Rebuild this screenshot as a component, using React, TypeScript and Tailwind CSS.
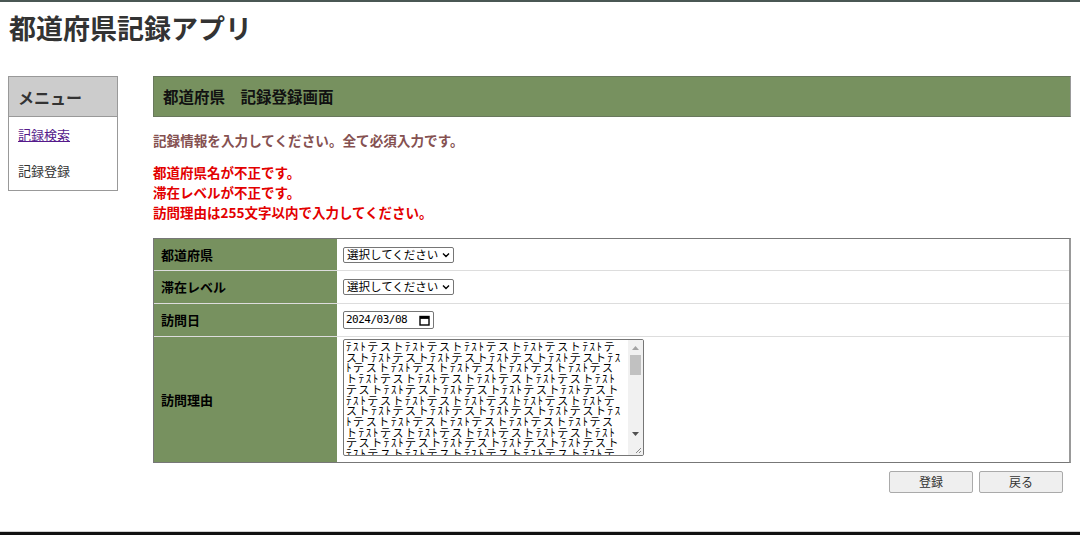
import React from "react";

const jp = { fontFamily: '"Noto Sans CJK JP", "Noto Sans", sans-serif' };

const testText = "ﾃｽﾄテスト".repeat(70);

function Select() {
    return (
        <div className="h-[16px] w-[111px] border border-[#767676] rounded-[2px] bg-white flex items-center pl-[3px] pr-[3px] text-[11.5px] leading-none text-black">
            <span>選択してください</span>
            <svg width="8" height="6" viewBox="0 0 8 6" className="ml-auto">
                <path d="M1 1.5 L4 4.5 L7 1.5" fill="none" stroke="#000" strokeWidth="1.4" />
            </svg>
        </div>
    );
}

function CalendarIcon() {
    return (
        <svg width="11" height="11" viewBox="0 0 11 11" className="ml-auto">
            <rect x="1" y="1.5" width="9" height="8.5" fill="none" stroke="#000" strokeWidth="1.4" />
            <rect x="1" y="1.5" width="9" height="2.4" fill="#000" />
        </svg>
    );
}

function Scrollbar() {
    return (
        <div className="w-[15px] flex flex-col bg-[#f1f1f1]">
            <div className="h-[15px] flex items-center justify-center">
                <svg width="7" height="4" viewBox="0 0 7 4"><path d="M0 4 L3.5 0 L7 4 Z" fill="#a3a3a3" /></svg>
            </div>
            <div className="mx-[2px] h-[20px] bg-[#c1c1c1]" />
            <div className="flex-1" />
            <div className="h-[15px] flex items-center justify-center">
                <svg width="7" height="4" viewBox="0 0 7 4"><path d="M0 0 L3.5 4 L7 0 Z" fill="#505050" /></svg>
            </div>
            <div className="h-[14px] flex items-end justify-end pr-[1px] pb-[1px]">
                <svg width="8" height="8" viewBox="0 0 8 8">
                    <path d="M7 2 L2 7 M7 5 L5 7" stroke="#888" strokeWidth="1" />
                </svg>
            </div>
        </div>
    );
}

export default function App() {
    return (
        <div className="h-[535px] flex flex-col border-t-2 border-[#4a5754] bg-white text-black" style={jp}>
            {/* タイトル */}
            <h1 className="pl-[9px] pt-[8px] text-[27px] leading-[36px] font-bold text-[#333]">都道府県記録アプリ</h1>

            <div className="flex mt-[30px] pl-[8px]">
                {/* メニュー */}
                <div className="w-[110px] border border-[#999] self-start pb-[1px]">
                    <div className="h-[40px] bg-[#cccccc] border-b border-[#999] flex items-center px-[9px] text-[16px] font-bold text-[#333]">
                        メニュー
                    </div>
                    <div className="h-[35px] flex items-center px-[9px] text-[13px]">
                        <a href="#" className="underline text-[#551a8b]">記録検索</a>
                    </div>
                    <div className="h-[37px] flex items-center px-[9px] text-[13px] text-[#333]">記録登録</div>
                </div>

                {/* メイン */}
                <div className="ml-[35px] w-[918px]">
                    <div className="h-[41px] bg-[#77915f] border border-[#69785d] border-r-[#999] flex items-center px-[9px] text-[15.5px] font-bold text-[#111]">
                        都道府県　記録登録画面
                    </div>

                    <p className="mt-[13px] text-[13.6px] leading-[20px] font-bold text-[#855151]">
                        記録情報を入力してください。全て必須入力です。
                    </p>

                    <div className="mt-[12px] text-[13.5px] leading-[20px] font-bold text-[#e30000]">
                        <p>都道府県名が不正です。</p>
                        <p>滞在レベルが不正です。</p>
                        <p>訪問理由は255文字以内で入力してください。</p>
                    </div>

                    <div className="mt-[16px] border border-[#777] border-r-2 border-r-[#999]">
                        <div className="flex h-[32px] border-b border-[#ddd]">
                            <div className="w-[183px] bg-[#77915f] flex items-center px-[7px] text-[13px] font-bold">都道府県</div>
                            <div className="flex-1 flex items-center px-[6px]"><Select /></div>
                        </div>
                        <div className="flex h-[33px] border-b border-[#ddd]">
                            <div className="w-[183px] bg-[#77915f] flex items-center px-[7px] text-[13px] font-bold">滞在レベル</div>
                            <div className="flex-1 flex items-center px-[6px]"><Select /></div>
                        </div>
                        <div className="flex h-[33px] border-b border-[#ddd]">
                            <div className="w-[183px] bg-[#77915f] flex items-center px-[7px] text-[13px] font-bold">訪問日</div>
                            <div className="flex-1 flex items-center px-[6px]">
                                <div className="h-[18px] w-[91px] border border-[#767676] rounded-[2px] flex items-center px-[2px] pr-[3px] text-[11px]" style={{ fontFamily: '"DejaVu Sans Mono", monospace' }}>
                                    <span className="tracking-[-0.5px]">2024/03/08</span>
                                    <CalendarIcon />
                                </div>
                            </div>
                        </div>
                        <div className="flex h-[125px]">
                            <div className="w-[183px] bg-[#77915f] flex items-center px-[7px] text-[13px] font-bold">訪問理由</div>
                            <div className="flex-1 px-[6px] pt-[2px]">
                                <div className="flex w-[301px] h-[117px] border border-[#767676] rounded-[2px] overflow-hidden">
                                    <textarea
                                        readOnly
                                        defaultValue={testText}
                                        className="flex-1 h-full px-[2px] py-[1px] text-[11px] leading-[10.7px] tracking-[1.6px] break-all resize-none overflow-hidden outline-none"
                                        style={jp}
                                    />
                                    <Scrollbar />
                                </div>
                            </div>
                        </div>
                    </div>

                    <div className="flex justify-end gap-[6px] mt-[8px] pr-[8px]">
                        <button className="w-[84px] h-[22px] bg-[#efefef] border border-[#aaa] rounded-[2px] text-[12px] text-[#333]">登録</button>
                        <button className="w-[84px] h-[22px] bg-[#efefef] border border-[#aaa] rounded-[2px] text-[12px] text-[#333]">戻る</button>
                    </div>
                </div>
            </div>

            <div className="mt-auto h-[4px] border-t border-[#d0d0d0] bg-[#111]" />
        </div>
    );
}
